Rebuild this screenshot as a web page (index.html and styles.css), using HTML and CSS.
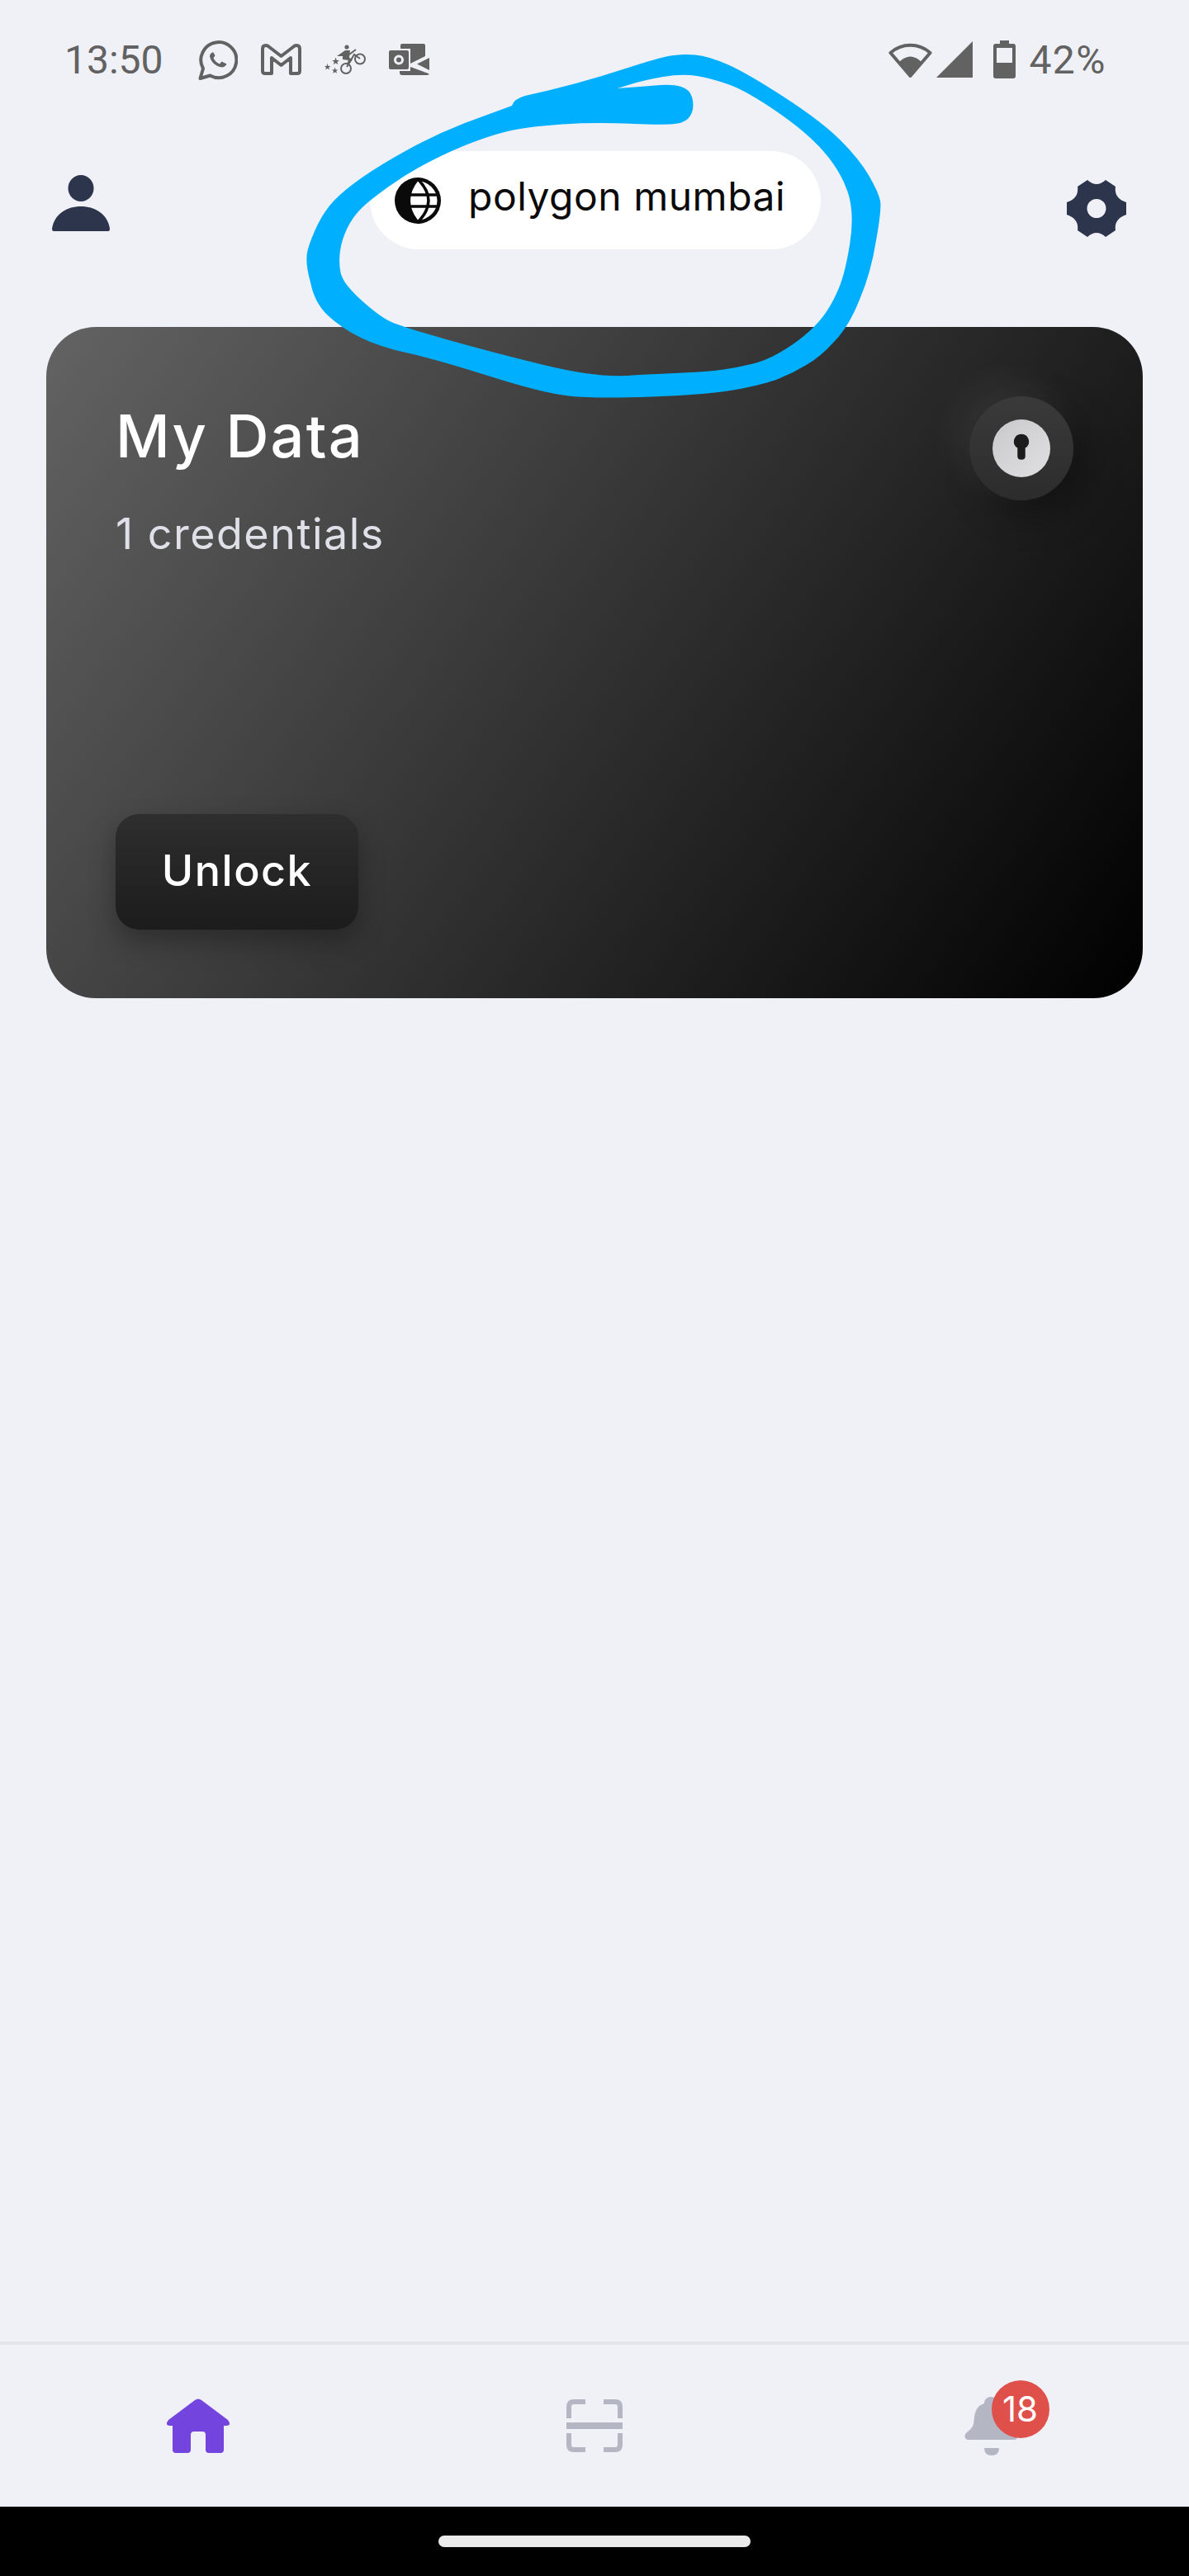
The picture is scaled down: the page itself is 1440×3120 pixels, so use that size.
FILE: index.html
```html
<!DOCTYPE html>
<html lang="en">
<head>
    <meta charset="UTF-8">
    <meta name="viewport" content="width=device-width, initial-scale=1.0">
    <title>My Data</title>
    <link rel="stylesheet" href="styles.css">
</head>
<body>
    <div class="screen">
        <!-- status bar -->
        <div class="status-bar">
            <span class="clock">13:50</span>
            <svg class="st-icon" width="48" height="49" viewBox="0 0 48 49">
                <path class="line" d="M2.5 47 L6 35 A21.5 21.5 0 1 1 14.5 43.5 Z"/>
                <path class="solid" d="M17 15.5 Q14.5 16.5 14 20 C15 27 22 33 29 33.5 Q33 33 34.5 29.5 L28.5 26.5 L26 29.5 C22 28 19.5 25 18.5 22 L20.5 19.5 L18.5 15.5 Z"/>
            </svg>
            <svg class="st-icon" width="49" height="38" viewBox="0 0 49 38">
                <path class="line" d="M2 6 Q2 2 6 2 Q8 2 9.5 3.5 L24.5 15 L39.5 3.5 Q41 2 43 2 Q47 2 47 6 V33 Q47 36 44 36 H36 V17 L24.5 26 L13 17 V36 H5 Q2 36 2 33 Z"/>
            </svg>
            <svg class="st-icon" width="50" height="36" viewBox="0 0 50 36">
                <circle class="thin" cx="43" cy="17.5" r="6"/>
                <circle class="thin" cx="26" cy="29" r="6"/>
                <circle class="solid" cx="27" cy="3" r="2.6"/>
                <path class="solid" d="M15 14 L25 7 H31 L30 16 L34 18 L29 25 L27 23 L29 19 L22 18 L22 14 Z"/>
                <path class="thin" d="M30 12 L38 6 M27 27 L36 12 L43 17"/>
                <polygon class="solid" points="13.6,15.5 14.8,19 18,19 15.4,21 16.4,24.2 13.6,22.3 10.8,24.2 11.8,21 9.2,19 12.4,19"/>
                <polygon class="solid" points="3.6,23 4.6,26 7.4,26 5.2,27.7 6,30.4 3.6,28.8 1.2,30.4 2,27.7 0,26 2.6,26"/>
                <polygon class="solid" points="12.6,27.5 13.6,30.4 16.4,30.4 14.2,32.1 15,34.8 12.6,33.2 10.2,34.8 11,32.1 8.8,30.4 11.6,30.4"/>
            </svg>
            <svg class="st-icon" width="49" height="38" viewBox="0 0 49 38">
                <path class="solid" fill-rule="evenodd" d="M2 8 H22 Q24 8 24 10 V29 Q24 31 22 31 H2 Q0 31 0 29 V10 Q0 8 2 8 Z M12 13.5 A6 6 0 1 0 12 25.5 A6 6 0 1 0 12 13.5 Z M12 16.5 A3 3 0 1 1 12 22.5 A3 3 0 1 1 12 16.5 Z"/>
                <path class="solid" d="M14 2 Q14 0 16 0 H42 Q44 0 44 2 V15 L26 24 V6 H14 Z"/>
                <path class="solid" d="M34 24.5 L49 17 V32 Z"/>
                <path class="solid" d="M26 28 L49 36.5 L47 38 H16 Q13 38 13 35 V33 H26 Z"/>
            </svg>
            <div class="status-right">
                <svg class="wifi" width="53" height="45" viewBox="0 0 53 45">
                    <path class="line" d="M2.5 14 A36 36 0 0 1 50.5 14 L26.5 42 Z"/>
                    <path class="solid" d="M13 25 Q26.5 12 40 25 L26.5 43 Z"/>
                </svg>
                <svg class="signal" width="44" height="44" viewBox="0 0 44 44">
                    <path class="solid" d="M44 0 V44 H0 Z"/>
                </svg>
                <svg class="battery" width="27" height="46" viewBox="0 0 27 46">
                    <path class="solid" fill-rule="evenodd" d="M8 0 H19 V4 H24 Q27 4 27 7 V43 Q27 46 24 46 H3 Q0 46 0 43 V7 Q0 4 3 4 H8 Z M4 9 V27 H23 V9 Z"/>
                </svg>
                <span class="pct">42%</span>
            </div>
        </div>

        <!-- top bar -->
        <div class="top-bar">
            <svg class="person" width="70" height="68" viewBox="0 0 70 68">
                <ellipse cx="35" cy="16" rx="15.5" ry="16"/>
                <path d="M0 65 C2 50 15 38 35 38 S68 50 70 65 Q70 68 68 68 H2 Q0 68 0 65 Z"/>
            </svg>
            <div class="network-pill">
                <svg width="56" height="56" viewBox="0 0 56 56">
                    <circle cx="28" cy="28" r="28" fill="#0a0a0a"/>
                    <path d="M28 4.5 A23.5 23.5 0 0 1 28 51.5 Q19 40 19 28 Q19 16 28 4.5 Z" fill="#fff"/>
                    <path class="globe-line" d="M28 2 Q54 28 28 54 M14 21 H54 M14 35 H54"/>
                </svg>
                <span>polygon mumbai</span>
            </div>
            <svg class="gear" width="72" height="69" viewBox="0 0 72 69">
                <path fill-rule="evenodd" d="M25 0 Q36 10 47 0 L59 8 Q57 22 72 27 V42 Q57 47 59 61 L47 69 Q36 59 25 69 L13 61 Q15 47 0 42 V27 Q15 22 13 8 Z M36 23 A11.5 11.5 0 1 0 36 46 A11.5 11.5 0 1 0 36 23 Z"/>
            </svg>
        </div>

        <!-- credentials card -->
        <div class="data-card">
            <div class="card-head">
                <div>
                    <h2>My Data</h2>
                    <p>1 credentials</p>
                </div>
                <div class="lock">
                    <div class="lock-face">
                        <svg width="30" height="44" viewBox="0 0 30 44">
                            <path d="M15 2 A10.5 10.5 0 0 1 20.5 21.5 V33 Q20.5 38 15 38 Q9.5 38 9.5 33 V21.5 A10.5 10.5 0 0 1 15 2 Z"/>
                        </svg>
                    </div>
                </div>
            </div>
            <button class="unlock">Unlock</button>
        </div>

        <div class="spacer"></div>

        <!-- bottom nav -->
        <div class="bottom-nav">
            <div class="nav-item">
                <svg width="78" height="66" viewBox="0 0 78 66">
                    <path fill="#7444de" d="M35 2 Q39 -1 43 2 L75 26 Q80 33 73 33 H70 V62 Q70 66 66 66 H52 Q48 66 48 62 V44 Q48 40 44 40 H34 Q30 40 30 44 V62 Q30 66 26 66 H12 Q8 66 8 62 V33 H5 Q-2 33 3 26 Z"/>
                </svg>
            </div>
            <div class="nav-item">
                <svg class="scan" width="68" height="64" viewBox="0 0 68 64">
                    <path d="M23 3 H9 Q3 3 3 9 V23 M45 3 H59 Q65 3 65 9 V23 M3 41 V55 Q3 61 9 61 H23 M65 41 V55 Q65 61 59 61 H45"/>
                    <rect class="scan-bar" x="0" y="28" width="68" height="8"/>
                </svg>
            </div>
            <div class="nav-item">
                <div class="bell">
                    <svg width="65" height="71" viewBox="0 0 65 71">
                        <path fill="#b5b6c4" d="M32 0 C27 0 24 4 24 8 C14 11 12 20 11.5 30 C11 36 8 39 3 43 C-1 46 0 52 5 52 H60 C65 52 66 46 62 43 C57 39 54 36 53.5 30 C53 20 51 11 41 8 C40 4 37 0 32 0 Z M24 62 H42 Q42 71 33 71 Q24 71 24 62 Z"/>
                    </svg>
                    <span class="badge">18</span>
                </div>
            </div>
        </div>

        <div class="gesture-bar"><div class="gesture-pill"></div></div>

        <!-- blue marker scribble drawn over the screenshot -->
        <svg class="scribble" width="1440" height="520" viewBox="0 0 1440 520">
            <path fill="#00b0ff" fill-rule="evenodd" d="M759 82.5 Q798 70 812 67.5 Q826 65 842 66.5 Q858 68 881 78 Q904 88 949.5 117.5 Q995 147 1018 170 Q1041 193 1052.5 213 Q1064 233 1066 243 Q1068 253 1061 291.5 Q1055 330 1041 363 Q1028 396 1010 414 Q994 432 976.5 442 Q960 452 943.5 458.5 Q927 465 893.5 471.5 Q860 478 790 480.5 Q720 483 688.5 479.5 Q657 476 592.5 455.5 Q528 435 493.5 427.5 Q459 420 436 408.5 Q413 397 397 382 Q381 367 376 342 Q369 317 372.5 303.5 Q376 290 384.5 272.5 Q393 255 405 242.5 Q417 230 438.5 215 Q460 200 493.5 181.5 Q527 163 563 149 L620 128 Q622 120 636 116 Q700 102 759 82.5 Z M748 107 L764 102 Q780 97 803 93 Q826 89 844 92 Q862 95 883 102.5 Q904 110 940.5 135 Q977 160 997.5 183.5 Q1018 207 1026.5 232 Q1035 257 1029.5 293.5 Q1024 330 1015.5 350 Q1007 370 997 383 Q987 396 973.5 407 Q960 418 943.5 427.5 Q927 437 910 441 Q893 445 876.5 447.5 Q860 450 827.5 451.5 Q795 453 757.5 455 Q720 457 658.5 442 Q597 427 542 411.5 Q487 396 473 389.5 Q459 383 437 363 Q415 343 412.5 330 Q410 317 412 303.5 Q414 290 420.5 276.5 Q427 263 437 253 Q447 243 470 226.5 Q493 210 520 196 Q547 182 573.5 172 Q600 162 621.5 157.5 Q643 153 681.5 150.5 Q720 148 767.5 150 Q815 152 825 148.5 Q835 145 838 136 Q841 127 838 117.5 Q835 108 825 105 Q815 102 800 103 Z"/>
        </svg>
    </div>
</body>
</html>
```

FILE: styles.css
```css
body {
    margin: 0;
    padding: 0;
    background-color: #f0f1f7;
    font-family: Inter, "Noto Sans", sans-serif;
}
.screen {
    position: relative;
    display: flex;
    flex-direction: column;
    width: 1440px;
    height: 3120px;
    overflow: hidden;
}

/* status bar */
.status-bar {
    display: flex;
    align-items: center;
    gap: 28px;
    height: 144px;
    padding: 0 100px 0 78px;
    font-family: Roboto, sans-serif;
    font-size: 48px;
    color: #626262;
}
.clock {
    margin-right: 14px;
}
.status-right {
    display: flex;
    align-items: center;
    margin-left: auto;
}
.wifi {
    margin-right: 5px;
}
.signal {
    margin-right: 25px;
}
.pct {
    margin-left: 16px;
    letter-spacing: 1.5px;
}
.line {
    fill: none;
    stroke: #626262;
    stroke-width: 4;
    stroke-linejoin: round;
}
.thin {
    fill: none;
    stroke: #626262;
    stroke-width: 2;
}
.solid {
    fill: #626262;
}

/* top bar */
.top-bar {
    display: flex;
    align-items: center;
    height: 119px;
    margin-top: 39px;
    padding: 0 76px 0 63px;
}
.person {
    fill: #2d354d;
    margin-top: 6px;
}
.gear {
    fill: #2d354d;
    margin-left: auto;
    margin-top: 20px;
}
.network-pill {
    display: flex;
    align-items: center;
    gap: 33px;
    box-sizing: border-box;
    width: 546px;
    height: 119px;
    margin-left: 315px;
    padding-left: 30px;
    background-color: #fff;
    border-radius: 60px;
    font-size: 48px;
    letter-spacing: 0.5px;
    color: #0a0a0a;
}
.network-pill span {
    position: relative;
    top: -5px;
}
.globe-line {
    fill: none;
    stroke: #0a0a0a;
    stroke-width: 3.5;
}

/* card */
.data-card {
    display: flex;
    flex-direction: column;
    justify-content: space-between;
    box-sizing: border-box;
    height: 813px;
    margin: 94px 56px 0;
    padding: 84px 84px 83px;
    border-radius: 60px;
    background: linear-gradient(125deg, #636363, #000);
    color: #fff;
}
.card-head {
    display: flex;
    justify-content: space-between;
    align-items: flex-start;
}
.data-card h2 {
    margin: 4px 0 0;
    font-size: 72px;
    font-weight: 500;
    line-height: 88px;
    letter-spacing: 2.2px;
}
.data-card p {
    margin: 43px 0 0;
    font-size: 52px;
    font-weight: 400;
    line-height: 64px;
    letter-spacing: 1.5px;
    color: #dfe0e8;
}
.lock {
    display: flex;
    align-items: center;
    justify-content: center;
    width: 126px;
    height: 126px;
    border-radius: 50%;
    background: linear-gradient(180deg, #3a3a3a, #2c2c2c);
    box-shadow: -16px -16px 44px rgba(255, 255, 255, 0.07), 16px 16px 44px rgba(0, 0, 0, 0.35);
}
.lock-face {
    display: flex;
    align-items: center;
    justify-content: center;
    width: 70px;
    height: 70px;
    border-radius: 50%;
    background: linear-gradient(135deg, #c9c9cb, #e0e0e2);
}
.lock-face svg {
    fill: #1c1c1c;
    width: 26px;
    height: 38px;
}
.unlock {
    width: 294px;
    height: 140px;
    padding: 0 0 4px;
    border: none;
    border-radius: 28px;
    background: linear-gradient(180deg, #2e2e2e, #1c1c1c);
    box-shadow: 0 14px 32px rgba(0, 0, 0, 0.3);
    font-family: Inter, sans-serif;
    font-size: 52px;
    font-weight: 500;
    letter-spacing: 1.5px;
    color: #fff;
}

.spacer {
    flex: 1;
}

/* bottom nav */
.bottom-nav {
    display: grid;
    grid-template-columns: 1fr 1fr 1fr;
    height: 196px;
    border-top: 4px solid #e4e5ea;
}
.nav-item {
    display: flex;
    align-items: center;
    justify-content: center;
}
.nav-item svg {
    display: block;
}
.scan path {
    fill: none;
    stroke: #b5b6c4;
    stroke-width: 6;
}
.scan-bar {
    fill: #b5b6c4;
}
.bell {
    position: relative;
}
.badge {
    position: absolute;
    top: -20px;
    left: 33px;
    width: 70px;
    height: 70px;
    border-radius: 50%;
    background-color: #e0504a;
    color: #fff;
    font-size: 42px;
    line-height: 70px;
    text-align: center;
}
.gesture-bar {
    display: flex;
    align-items: center;
    justify-content: center;
    height: 84px;
    background-color: #000;
}
.gesture-pill {
    width: 378px;
    height: 14px;
    border-radius: 7px;
    background-color: #ebebeb;
}

.scribble {
    position: absolute;
    top: 0;
    left: 0;
    pointer-events: none;
}
```
